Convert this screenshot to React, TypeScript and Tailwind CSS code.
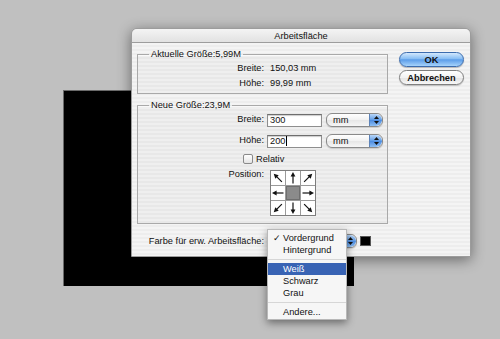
import type { ReactNode } from "react";

type ArrowProps = Readonly<{ angle: number }>;

const stripes =
  "bg-[repeating-linear-gradient(to_bottom,#f4f4f4_0px,#f4f4f4_2px,#ededed_2px,#ededed_4px)]";

// arrow pointing up, rotated for each anchor cell
function Arrow({ angle }: ArrowProps) {
  return (
    <svg width="14" height="14" viewBox="0 0 14 14">
      <g transform={`rotate(${angle} 7 7)`}>
        <line x1="7" y1="12.5" x2="7" y2="4" stroke="#111" strokeWidth="1.2" />
        <path d="M7 1 L4.6 5.6 L9.4 5.6 Z" fill="#111" />
      </g>
    </svg>
  );
}

function Stepper() {
  return (
    <span className="flex h-full w-[13px] flex-col items-center justify-center gap-[2px] rounded-r-[6px] border-l border-[#5d83b8] bg-[linear-gradient(to_bottom,#b9d6f7,#5d9be6_50%,#4a8ae0_51%,#8fc0f5)]">
      <svg width="5" height="3" viewBox="0 0 5 3">
        <path d="M2.5 0 L5 3 L0 3 Z" fill="#111" />
      </svg>
      <svg width="5" height="3" viewBox="0 0 5 3">
        <path d="M0 0 L5 0 L2.5 3 Z" fill="#111" />
      </svg>
    </span>
  );
}

function PopUp({ label, width }: Readonly<{ label?: string; width: string }>) {
  return (
    <div
      className={`flex h-[14px] ${width} items-stretch overflow-hidden rounded-[6px] border border-[#8a8a8a] bg-[linear-gradient(to_bottom,#ffffff,#f1f1f1_50%,#e6e6e6_51%,#f6f6f6)] shadow-[0_1px_1px_rgba(0,0,0,0.15)]`}
    >
      <span className="flex-1 pl-[6px] leading-[12px]">{label}</span>
      <Stepper />
    </div>
  );
}

function TextField({ value, caret }: Readonly<{ value: string; caret?: boolean }>) {
  return (
    <div className="flex h-[13px] w-[55px] items-center border border-[#8e8e8e] border-t-[#6e6e6e] bg-white pl-[2px] shadow-[inset_0_1px_1px_rgba(0,0,0,0.2)]">
      <span className="leading-[11px]">{value}</span>
      {caret && <span className="ml-px h-[10px] w-px bg-black" />}
    </div>
  );
}

function Group({ title, children, className }: Readonly<{ title: string; children: ReactNode; className?: string }>) {
  return (
    <fieldset
      className={`w-[251px] border border-[#a9a9a9] bg-black/[0.02] shadow-[inset_0_1px_0_rgba(255,255,255,0.7)] ${className ?? ""}`}
    >
      <legend className="ml-[11px] px-[2px] leading-[12px]">{title}</legend>
      {children}
    </fieldset>
  );
}

const anchors = [-45, 0, 45, -90, null, 90, -135, 180, 135];

function AnchorGrid() {
  return (
    <div className="mt-[2px] grid w-[46px] grid-cols-3 gap-px border border-[#7d7d7d] bg-[#9a9a9a]">
      {anchors.map((angle, i) =>
        angle === null ? (
          <div key={i} className="h-[14px] w-[14px] bg-[#8b8b8b] shadow-[inset_0_0_0_1px_#6f6f6f]" />
        ) : (
          <div key={i} className="flex h-[14px] w-[14px] items-center justify-center bg-white">
            <Arrow angle={angle} />
          </div>
        ),
      )}
    </div>
  );
}

function MenuItem({ label, checked, active }: Readonly<{ label: string; checked?: boolean; active?: boolean }>) {
  return (
    <div
      className={
        active
          ? "flex h-[12px] items-center bg-[#3863b4] text-white"
          : "flex h-[12px] items-center text-[#111]"
      }
    >
      <span className="w-[15px] pl-[5px] leading-[12px]">{checked ? "✓" : ""}</span>
      <span className="leading-[12px]">{label}</span>
    </div>
  );
}

function Separator() {
  return (
    <div className="flex h-[7px] items-center">
      <div className="h-px w-full bg-[#d6d6d6]" />
    </div>
  );
}

export default function App() {
  return (
    <div className="relative h-[339px] w-[500px] overflow-hidden bg-[#c0c0c0] font-['Liberation_Sans',Arial,sans-serif] text-[9.25px] text-[#111]">
      {/* document canvas behind the dialog */}
      <div className="absolute left-[63px] top-[90px] h-[196px] w-[291px] border-l border-t border-[#6a6a6a] bg-black" />

      {/* canvas size sheet */}
      <div className="absolute left-[131px] top-[28px] flex h-[229px] w-[340px] flex-col rounded-t-[5px] border border-[#9c9c9c] shadow-[0_3px_14px_rgba(0,0,0,0.45)]">
        <div className="flex h-[14px] items-center justify-center rounded-t-[5px] border-b border-[#9d9d9d] bg-[linear-gradient(to_bottom,#f4f4f4,#e2e2e2)] leading-[12px]">
          Arbeitsfläche
        </div>
        <div className={`flex flex-1 gap-[11px] pl-[5px] ${stripes}`}>
          <div className="flex flex-col">
            <Group title="Aktuelle Größe:5,99M" className="mt-[5px] pb-[2px] pt-[1px]">
              <div className="grid grid-cols-[126px_auto] gap-x-[6px] leading-[15px]">
                <span className="text-right">Breite:</span>
                <span>150,03 mm</span>
                <span className="text-right">Höhe:</span>
                <span>99,99 mm</span>
              </div>
            </Group>

            <Group title="Neue Größe:23,9M" className="mt-[5px] pb-[7px] pt-[2px]">
              <div className="flex flex-col">
                <div className="flex items-center">
                  <span className="w-[126px] text-right">Breite:</span>
                  <div className="ml-[3px]">
                    <TextField value="300" />
                  </div>
                  <div className="ml-[4px]">
                    <PopUp label="mm" width="w-[57px]" />
                  </div>
                </div>
                <div className="mt-[7px] flex items-center">
                  <span className="w-[126px] text-right">Höhe:</span>
                  <div className="ml-[3px]">
                    <TextField value="200" caret />
                  </div>
                  <div className="ml-[4px]">
                    <PopUp label="mm" width="w-[57px]" />
                  </div>
                </div>
                <div className="ml-[105px] mt-[6px] flex h-[10px] items-center gap-[3px]">
                  <span className="h-[10px] w-[10px] rounded-[2px] border border-[#8a8a8a] bg-[linear-gradient(to_bottom,#ffffff,#e4e4e4)]" />
                  <span className="leading-[12px]">Relativ</span>
                </div>
                <div className="mt-[4px] flex items-start">
                  <span className="w-[126px] text-right leading-[12px]">Position:</span>
                  <div className="ml-[6px]">
                    <AnchorGrid />
                  </div>
                </div>
              </div>
            </Group>

            <div className="mt-[10px] flex items-center">
              <span className="w-[127px] text-right leading-[12px]">Farbe für erw. Arbeitsfläche:</span>
              <div className="ml-[3px]">
                {/* label hidden under the open menu */}
                <PopUp width="w-[90px]" />
              </div>
              <span className="ml-[3px] h-[10px] w-[11px] border border-[#555] bg-black" />
            </div>
          </div>

          <div className="mt-[9px] flex flex-col gap-[3px]">
            <button className="h-[15px] w-[65px] rounded-full border border-[#3c6cae] bg-[linear-gradient(to_bottom,#d3e8fd,#86bdf4_45%,#5c9de9_52%,#a6d3fb)] text-[9.25px] font-bold leading-[12px] text-[#111] shadow-[0_1px_1px_rgba(0,0,0,0.25)]">
              OK
            </button>
            <button className="h-[15px] w-[65px] rounded-full border border-[#7f7f7f] bg-[linear-gradient(to_bottom,#ffffff,#f2f2f2_50%,#e3e3e3_52%,#f7f7f7)] text-[9.25px] font-bold leading-[12px] text-[#111] shadow-[0_1px_1px_rgba(0,0,0,0.2)]">
              Abbrechen
            </button>
          </div>
        </div>
      </div>

      {/* open pop-up menu */}
      <div className="absolute left-[267px] top-[229px] flex h-[91px] w-[80px] flex-col border border-[#b8b8b8] bg-[#f6f6f6] pt-[2px] shadow-[0_3px_8px_rgba(0,0,0,0.45)]">
        <MenuItem label="Vordergrund" checked />
        <MenuItem label="Hintergrund" />
        <Separator />
        <MenuItem label="Weiß" active />
        <MenuItem label="Schwarz" />
        <MenuItem label="Grau" />
        <Separator />
        <MenuItem label="Andere..." />
      </div>
    </div>
  );
}
